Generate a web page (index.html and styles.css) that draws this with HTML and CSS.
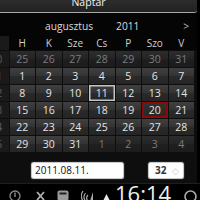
FILE: index.html
```html
<!DOCTYPE html>
<html>
<head>
<meta charset="utf-8">
<link rel="stylesheet" href="styles.css">
</head>
<body>
<div class="screen">
  <div class="dialog">
    <div class="title"><span>Naptár</span></div>
    <div class="nav"><span class="month">augusztus</span><span class="year">2011</span><span class="next">&gt;</span></div>
    <div class="grid head">
      <div class="wk"></div><div>H</div><div>K</div><div>Sze</div><div>Cs</div><div>P</div><div>Szo</div><div>V</div>
    </div>
    <div class="grid days">
      <div class="wk"><span>30</span></div><div class="d o">25</div><div class="d o">26</div><div class="d o">27</div><div class="d o">28</div><div class="d o">29</div><div class="d o">30</div><div class="d o">31</div>
      <div class="wk"><span>31</span></div><div class="d">1</div><div class="d">2</div><div class="d">3</div><div class="d">4</div><div class="d">5</div><div class="d">6</div><div class="d">7</div>
      <div class="wk"><span>32</span></div><div class="d">8</div><div class="d">9</div><div class="d">10</div><div class="d today">11</div><div class="d">12</div><div class="d">13</div><div class="d">14</div>
      <div class="wk"><span>33</span></div><div class="d">15</div><div class="d">16</div><div class="d">17</div><div class="d">18</div><div class="d">19</div><div class="d sel">20</div><div class="d">21</div>
      <div class="wk"><span>34</span></div><div class="d">22</div><div class="d">23</div><div class="d">24</div><div class="d">25</div><div class="d">26</div><div class="d">27</div><div class="d">28</div>
      <div class="wk"><span>35</span></div><div class="d">29</div><div class="d">30</div><div class="d">31</div><div class="d o">1</div><div class="d o">2</div><div class="d o">3</div><div class="d o">4</div>
    </div>
    <div class="inputs">
      <div class="date">2011.08.11.</div>
      <div class="num"><span>32</span><span class="spin">◇</span></div>
    </div>
  </div>
  <div class="status">
    <svg class="ic alert" width="12" height="12" viewBox="0 0 12 12"><circle cx="6" cy="6" r="5" fill="none" stroke="#8a8a8a" stroke-width="1.3"/><rect x="5.3" y="2.5" width="1.4" height="4.5" fill="#8a8a8a"/></svg>
    <svg class="ic usb" width="9" height="10" viewBox="0 0 9 10"><path d="M1 1 L8 9 M8 1 L1 9" stroke="#b0b0b0" stroke-width="1.8"/></svg>
    <svg class="ic box" width="12" height="11" viewBox="0 0 12 11"><rect x="0.5" y="0.5" width="11" height="10" rx="2" fill="#9a9a9a"/><rect x="2.5" y="2.5" width="7" height="2" fill="#222"/></svg>
    <svg class="ic snd" width="13" height="12" viewBox="0 0 13 12"><path d="M9 11 L12 2 L12 11 Z" fill="#aaa"/><path d="M7 11 A4 4 0 0 1 7 5" fill="none" stroke="#aaa" stroke-width="1.2"/><path d="M4.5 11 A6.5 6.5 0 0 1 4.5 3" fill="none" stroke="#aaa" stroke-width="1.2"/><path d="M2 11 A9 9 0 0 1 2 1" fill="none" stroke="#aaa" stroke-width="1.2"/></svg>
    <svg class="ic up" width="7" height="7" viewBox="0 0 7 7"><path d="M3.5 0 L7 7 L0 7 Z" fill="#e8e8e8"/></svg>
    <span class="clock">16:14</span>
    <svg class="ic ring" width="13" height="13" viewBox="0 0 13 13"><circle cx="6.5" cy="6.5" r="5.5" fill="none" stroke="#aaa" stroke-width="1.6"/></svg>
  </div>
</div>
</body>
</html>
```

FILE: styles.css
```css
* { box-sizing: border-box; margin: 0; padding: 0; }
html, body { width: 200px; height: 200px; overflow: hidden; background: #000; }
body { font-family: "Open Sans", "Noto Sans", sans-serif; color: #ddd; }

.screen { width: 200px; height: 200px; display: flex; flex-direction: column; overflow: hidden; }

.dialog {
  width: 197px;
  height: 183px;
  flex: none;
  background: #0e0e0e;
  display: flex;
  flex-direction: column;
}

.title {
  height: 13px;
  flex: none;
  background: linear-gradient(#2c2c2c, #222);
  border-bottom: 1px solid #a8a8a8;
  border-bottom-right-radius: 3px;
  display: flex;
  justify-content: center;
  padding-right: 20px;
  font-size: 10.5px;
  line-height: 11px;
  color: #f2f2f2;
  overflow: hidden;
}
.title span { margin-top: -3px; }

.nav {
  height: 23px;
  flex: none;
  display: flex;
  align-items: center;
  padding-top: 2px;
  font-size: 10.2px;
  color: #dcdcdc;
  background: #050505;
}
.month { margin-left: 45px; }
.year { margin-left: 23px; }
.next { margin-left: auto; margin-right: 8px; color: #bbb; }

.grid {
  display: grid;
  grid-template-columns: 8.5px repeat(7, 25.5px);
  column-gap: 1px;
}
.head {
  height: 14px;
  flex: none;
  margin-bottom: 1px;
  font-size: 10px;
  color: #cfcfcf;
  background: #050505;
}
.head div { display: flex; align-items: center; justify-content: center; }

.days {
  grid-template-rows: repeat(6, 16px);
  row-gap: 1px;
  flex: none;
}
.wk {
  background: #1a1a1a;
  overflow: hidden;
  display: flex;
  justify-content: flex-end;
  align-items: center;
  font-size: 10px;
  color: #5e5e5e;
}
.wk span { flex: none; width: 26px; text-align: center; margin-right: -1px; }

.d {
  display: flex;
  align-items: center;
  justify-content: center;
  font-size: 10.5px;
  color: #e4e4e4;
  background: linear-gradient(#404040, #333 50%, #2a2a2a 52%, #252525);
}
.d.o {
  color: #7c7c7c;
  background: linear-gradient(#2c2c2c, #242424 50%, #1f1f1f 52%, #1c1c1c);
}
.d.today { box-shadow: inset 0 0 0 1.5px #c4c4c4; }
.d.sel {
  box-shadow: inset 0 0 0 2px #8c0a0a;
  background: linear-gradient(#333, #262626);
}

.inputs {
  flex: none;
  margin-top: 11px;
  display: flex;
}
.date {
  margin-left: 32px;
  width: 91px;
  height: 15px;
  background: #fff;
  border-radius: 2px;
  box-shadow: 0 0 1px 0.5px #ddd;
  color: #111;
  font-size: 10px;
  line-height: 15px;
  padding-left: 3px;
}
.num {
  margin-left: 26px;
  width: 34px;
  height: 15px;
  background: #fff;
  border-radius: 2px;
  box-shadow: 0 0 1px 0.5px #ddd;
  color: #333;
  font-size: 10px;
  font-weight: bold;
  line-height: 15px;
  padding-left: 6px;
  display: flex;
}
.spin { margin-left: 6px; font-weight: normal; color: #c8c8c8; font-size: 9px; }

.status {
  flex: none;
  height: 17px;
  background: #000;
  border-top: 1px solid #1e1e1e;
  display: flex;
  align-items: flex-start;
  position: relative;
}
.ic { flex: none; display: block; }
.alert { margin-left: 9px; margin-top: 6px; }
.usb { margin-left: 15px; margin-top: 7px; }
.box { margin-left: 12px; margin-top: 6px; }
.snd { margin-left: 12px; margin-top: 6px; }
.up { margin-left: 9px; margin-top: 10px; }
.clock {
  margin-left: 5px;
  font-size: 22px;
  line-height: 22px;
  color: #f0f0f0;
  margin-top: -2px;
}
.ring { margin-left: auto; margin-right: 3px; margin-top: 6px; }
```
